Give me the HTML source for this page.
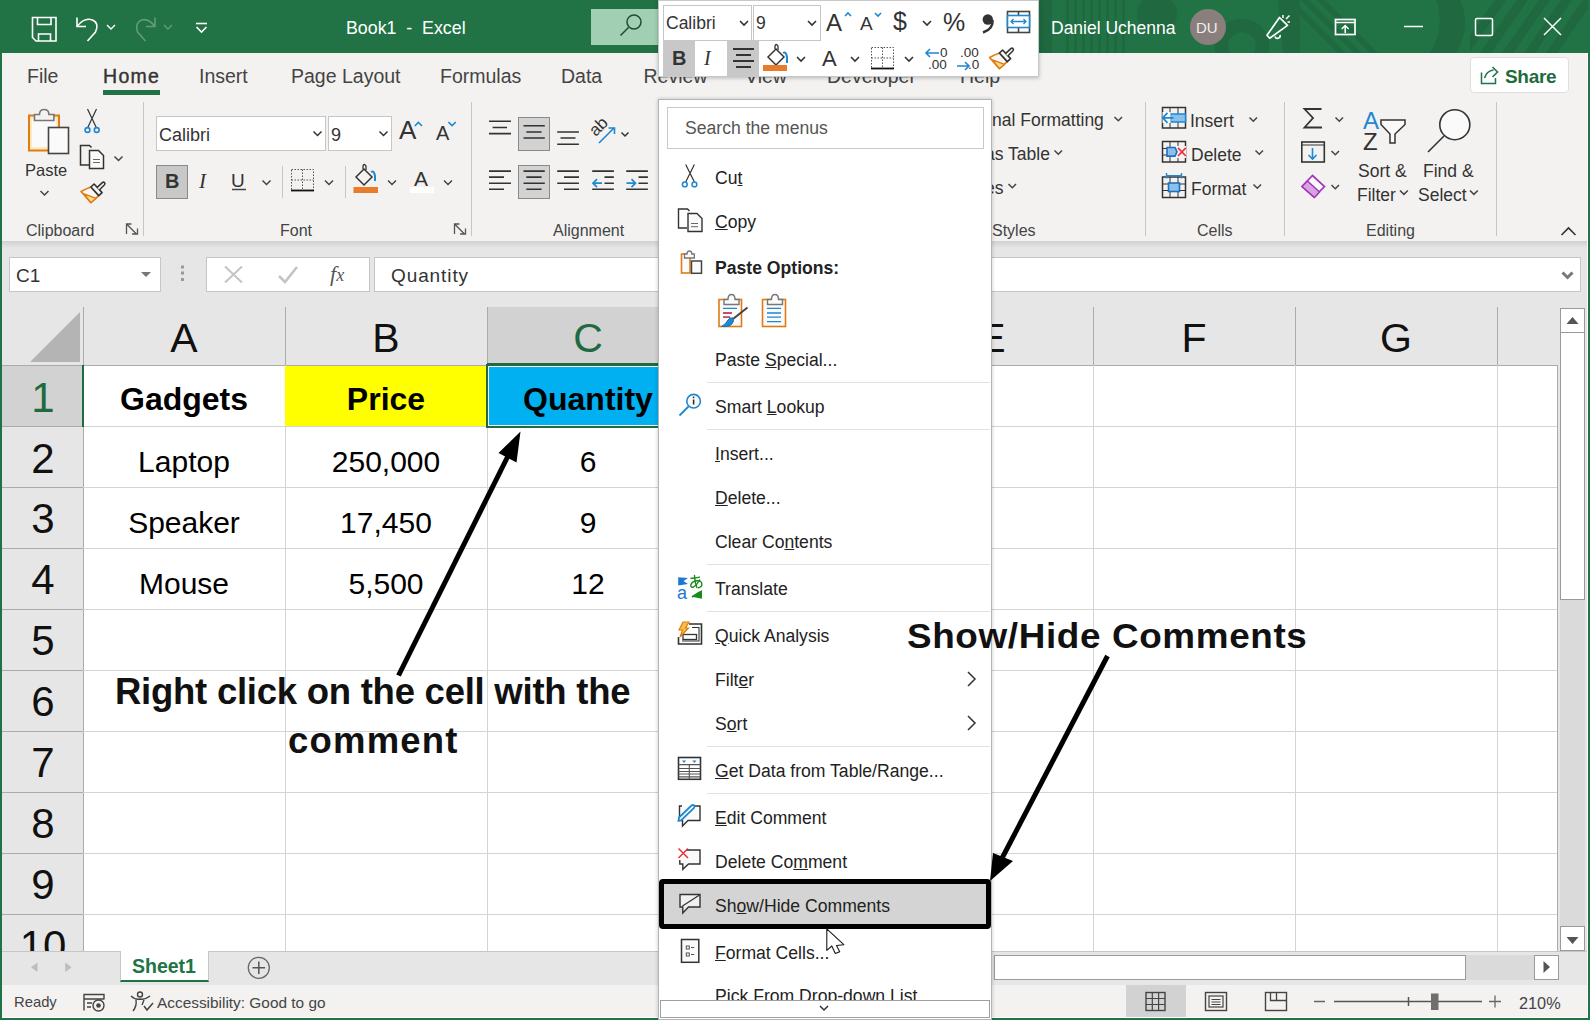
<!DOCTYPE html>
<html><head><meta charset="utf-8">
<style>
*{margin:0;padding:0;box-sizing:border-box}
html,body{width:1590px;height:1020px;overflow:hidden;background:#fff}
body{position:relative;font-family:"Liberation Sans",sans-serif;color:#222}
.a{position:absolute}
.t{position:absolute;white-space:nowrap;line-height:1}
svg{position:absolute;overflow:visible}
/* title */
#title{left:0;top:0;width:1590px;height:53px;background:#217346}
/* ribbon */
#ribbon{left:2px;top:53px;width:1585px;height:188px;background:#f3f2f1}
#fbar{left:2px;top:241px;width:1585px;height:66px;background:#e6e6e6}
.tab{font-size:19.5px;color:#444;top:67px}
.glabel{font-size:16px;color:#444;top:223px}
.sep{position:absolute;width:1px;background:#c8c6c4}
.rt{font-size:18px;color:#333}
/* grid */
#grid{left:2px;top:307px;width:1555px;height:644px;background:#fff}
.colh{position:absolute;top:307px;height:58px;background:#e6e6e6;border-right:1px solid #ababab;border-bottom:1px solid #ababab}
.ch{font-size:41px;color:#111;position:absolute;top:318px}
.rowh{position:absolute;left:2px;width:81px;background:#e6e6e6;border-bottom:1px solid #ababab;border-right:1px solid #ababab}
.rh{font-size:42px;color:#111;position:absolute}
.hl{position:absolute;left:83px;width:1474px;height:1px;background:#d4d4d4}
.vl{position:absolute;top:365px;height:586px;width:1px;background:#d4d4d4}
.cell{font-size:30px;color:#000;position:absolute;text-align:center;width:202px}
/* context menu */
#cm{left:658px;top:99px;width:334px;height:921px;background:#fff;border:1px solid #b4b4b4;box-shadow:0 0 4px rgba(0,0,0,.22)}
.mi{position:absolute;left:715px;font-size:17.6px;color:#222;margin-top:2px}
.msep{position:absolute;left:707px;width:283px;height:1px;background:#e1e1e1}
#mini{left:658px;top:0;width:381px;height:77px;background:#fff;border:1px solid #c8c8c8;box-shadow:0 1px 4px rgba(0,0,0,.25)}
.ann{font-weight:bold;color:#111;position:absolute}
</style></head>
<body>
<!-- TITLE BAR -->
<div id="title" class="a"></div>
<svg style="left:0;top:0" width="1" height="1" fill="none">
<defs><clipPath id="tb"><rect x="1040" y="0" width="548" height="53"/></clipPath><clipPath id="d1"><polygon points="1300,0 1333,0 1386,53 1300,53"/></clipPath><clipPath id="d2"><rect x="1470" y="0" width="118" height="53"/></clipPath></defs>
<g clip-path="url(#tb)" fill="#1f6840" stroke="none">
<rect x="1040" y="0" width="12" height="53"/>
<rect x="1066" y="0" width="3" height="53"/>
<rect x="1074" y="0" width="3" height="53"/>
<rect x="1082" y="0" width="3" height="53"/>
<rect x="1090" y="0" width="3" height="53"/>
<rect x="1098" y="0" width="3" height="53"/>
<rect x="1106" y="0" width="3" height="53"/>
<rect x="1114" y="0" width="3" height="53"/>
<rect x="1122" y="0" width="3" height="53"/>
<circle cx="1157" cy="14" r="20"/>
<circle cx="1242" cy="46" r="20.5" fill="none" stroke="#1f6840" stroke-width="13.5"/>
<polygon points="1278,0 1300,0 1300,53 1283,53"/>
<g clip-path="url(#d1)">
<polygon points="1285,0 1293,0 1346,53 1338,53"/>
<polygon points="1301,0 1309,0 1362,53 1354,53"/>
<polygon points="1317,0 1325,0 1378,53 1370,53"/>
<polygon points="1333,0 1341,0 1394,53 1386,53"/>
</g>
<path d="M1436,0 Q1446,26 1430,53 L1456,53 Q1472,26 1460,0 Z"/>
<g clip-path="url(#d2)">
<polygon points="1495,0 1506,0 1469,53 1458,53"/>
<polygon points="1517,0 1528,0 1491,53 1480,53"/>
<polygon points="1539,0 1550,0 1513,53 1502,53"/>
<polygon points="1561,0 1572,0 1535,53 1524,53"/>
<polygon points="1583,0 1594,0 1557,53 1546,53"/>
</g></g>
<g stroke="#fff" stroke-width="1.5">
<path d="M1267,35.2 L1279.5,17.5 L1287.5,25.4 L1269.7,38.2 Z" stroke-width="1.7" stroke-linejoin="round"/>
<path d="M1275,36.5 a2.6,2.6 0 0 0 5,-1.5" stroke-width="1.6"/>
<path d="M1283,15 v3 M1286,19 l3.5,-3.5 M1287.5,22 h2.5" stroke-width="1.5"/>
<rect x="1335.5" y="19.5" width="19.5" height="15" stroke-width="1.7"/>
<path d="M1335.5,22.5 h19.5 M1345.2,33 v-7.5 M1341.7,29 l3.5,-3.5 l3.5,3.5" stroke-width="1.5"/>
<path d="M1404,26.5 h19"/>
<rect x="1475.5" y="18.5" width="17" height="17" rx="1.5"/>
<path d="M1544,18 l17,17 M1561,18 l-17,17"/>
</g>
</svg>
<div class="t" style="left:346px;top:19.5px;font-size:17.8px;color:#fff">Book1&nbsp;&nbsp;-&nbsp;&nbsp;Excel</div>
<div class="a" style="left:591px;top:9px;width:70px;height:36px;background:#a0cfb3"></div>
<svg style="left:0;top:0" width="1" height="1" fill="none" stroke="#fff" stroke-width="1.6">
<path d="M32.5,17.5 h23.5 v23.5 h-20 l-3.5,-3.5 z"/>
<path d="M37.5,17.5 v7 h13.5 v-7"/>
<path d="M38.5,41 v-7 h12 v7"/>
<path d="M77,17.5 v9 h9" />
<path d="M77.5,26 q7,-9 15,-6 q7,3 3,12 l-8,9"/>
<polyline points="107,25 111,29 115,25" stroke-width="1.4"/>
<path d="M155,17.5 v9 h-9 M154.5,26 q-6,-8 -13,-6 q-7,3 -4,12 l8,9" stroke="#5f9c77"/>
<polyline points="164,25 168,29 172,25" stroke="#5f9c77" stroke-width="1.4"/>
<path d="M196,23.5 h11" stroke-width="1.6"/>
<polyline points="196.5,27 201.5,32 206.5,27" stroke-width="1.6"/>
<circle cx="634" cy="22" r="7" stroke="#1e4d33" stroke-width="1.5"/>
<line x1="628.5" y1="27.5" x2="620.5" y2="35.5" stroke="#1e4d33" stroke-width="1.6"/>
</svg>
<div class="t" style="left:1051px;top:20px;font-size:17.5px;color:#fff">Daniel Uchenna</div>
<div class="a" style="left:1190px;top:9px;width:36px;height:36px;border-radius:50%;background:#8a7f7c"></div>
<div class="t" style="left:1196px;top:20px;font-size:15px;color:#eee">DU</div>

<!-- RIBBON -->
<div id="ribbon" class="a"></div>
<div class="t tab" style="left:27px">File</div>
<div class="t tab" style="left:103px;color:#333;-webkit-text-stroke:0.4px #333;letter-spacing:1.3px">Home</div>
<div class="a" style="left:103px;top:90px;width:57px;height:5px;background:#217346"></div>
<div class="t tab" style="left:199px">Insert</div>
<div class="t tab" style="left:291px">Page Layout</div>
<div class="t tab" style="left:440px">Formulas</div>
<div class="t tab" style="left:561px">Data</div>
<div class="t tab" style="left:643.5px">Review</div>
<div class="t tab" style="left:745px">View</div>
<div class="t tab" style="left:827px">Developer</div>
<div class="t tab" style="left:960px">Help</div>

<div class="a" style="left:1470px;top:57px;width:99px;height:36px;background:#fff;border:1px solid #e1dfdd;border-radius:4px"></div>
<div class="t" style="left:1505px;top:66.7px;font-size:19px;font-weight:bold;color:#1e6b3d;letter-spacing:-0.3px">Share</div>
<svg style="left:0;top:0" width="1" height="1" fill="none" stroke="#217346" stroke-width="1.5">
<path d="M1481.5,72.5 v11 h14 v-5.5"/>
<path d="M1484.5,78 q2,-7 9,-8 M1492.5,67 l5,5 l-5,5" stroke-width="1.6"/>
</svg>

<div class="t glabel" style="left:26px">Clipboard</div>
<div class="t glabel" style="left:280px">Font</div>
<div class="t glabel" style="left:553px">Alignment</div>
<div class="t glabel" style="left:992px">Styles</div>
<div class="t glabel" style="left:1197px">Cells</div>
<div class="t glabel" style="left:1366px">Editing</div>
<div class="sep" style="left:143px;top:102px;height:134px"></div>
<div class="sep" style="left:471px;top:102px;height:134px"></div>
<div class="sep" style="left:1145px;top:102px;height:134px"></div>
<div class="sep" style="left:1284px;top:102px;height:134px"></div>
<div class="sep" style="left:1496px;top:102px;height:134px"></div>

<!-- RIBBON ICONS -->
<div class="a" style="left:156px;top:165px;width:32px;height:34px;background:#c8c8c8;border:1px solid #8a8a8a"></div>
<div class="a" style="left:156px;top:116px;width:170px;height:35px;background:#fff;border:1px solid #c6c6c6"></div>
<div class="a" style="left:328px;top:116px;width:64px;height:35px;background:#fff;border:1px solid #c6c6c6"></div>

<svg style="left:0;top:0" width="1" height="1" fill="none" stroke="#444" stroke-width="1.5">
<!-- paste -->
<rect x="29" y="115.5" width="30" height="35" fill="#fde9c0" stroke="#e07b12" stroke-width="2"/>
<rect x="32" y="119" width="24" height="28" fill="#fafafa" stroke="none"/>
<path d="M34.5,120.5 v-6 h5 q0,-5 4.7,-5 q4.7,0 4.7,5 h5 v6 z" fill="#f3f2f1" stroke="#777" stroke-width="1.6"/>
<rect x="48.5" y="127.5" width="20" height="26" fill="#fafafa" stroke="#444" stroke-width="1.6"/>
<polyline points="40.5,191 44.5,195 48.5,191" stroke-width="1.5"/>
<!-- scissors -->
<path d="M87.5,109 L96.5,128 M96.5,109 L87.5,128" stroke="#333" stroke-width="1.2"/>
<circle cx="87.5" cy="130" r="2.4" stroke="#1e88d2" stroke-width="1.6"/>
<circle cx="96.7" cy="130" r="2.4" stroke="#1e88d2" stroke-width="1.6"/>
<!-- copy -->
<path d="M89,165 h-8.5 v-19.5 h9 l2,2" stroke="#333" stroke-width="1.5"/>
<path d="M89.5,168.5 v-18 h9 l5,5 v13 z" fill="#fafafa" stroke="#333" stroke-width="1.5"/>
<path d="M93,159.5 h7 M93,162.5 h7" stroke="#666" stroke-width="1"/>
<polyline points="114.5,156.5 118.5,160.5 122.5,156.5"/>
<!-- format painter -->
<g transform="translate(80.5,181)"><path d="M0.6,10.5 Q6,7.5 10.4,6 L18.3,14.6 L10.4,21.6 Z" fill="#f7f7f7" stroke="#e07b12" stroke-width="1.7" stroke-linejoin="round"/>
<path d="M3.5,12.8 L15.5,17.4 L10.4,21.6 Z" fill="#fbd98a" stroke="#e07b12" stroke-width="1.3" stroke-linejoin="round"/>
<path d="M10.4,6 L13.6,3 L21.6,11.6 L18.3,14.6 Z" fill="#f7f7f7" stroke="#333" stroke-width="1.6" stroke-linejoin="round"/>
<path d="M16.5,6.6 L21.8,1.6 Q23,0.6 24,1.6 Q25,2.6 24,3.8 L18.8,9" fill="#f7f7f7" stroke="#333" stroke-width="1.5" stroke-linejoin="round"/></g>
<!-- launchers -->
<path d="M126.5,234 v-10 h5 M126.5,224 l10,10 M137.5,228.5 v5.5 h-5.5" stroke="#555" stroke-width="1.3"/>
<path d="M454.5,234 v-10 h5 M454.5,224 l10,10 M465.5,228.5 v5.5 h-5.5" stroke="#555" stroke-width="1.3"/>
<!-- font dropdowns -->
<polyline points="313.5,131.5 317.5,135.5 321.5,131.5" stroke="#333"/>
<polyline points="379.5,131.5 383.5,135.5 387.5,131.5" stroke="#333"/>
<polyline points="414.8,126 418.4,122.4 422,126" stroke="#1e88d2" stroke-width="1.6"/>
<polyline points="448.4,122 452.1,125.6 455.8,122" stroke="#1e88d2" stroke-width="1.6"/>
<polyline points="262.5,180.5 266.5,184.5 270.5,180.5"/>
<polyline points="325,180.5 329,184.5 333,180.5"/>
<polyline points="388,180.5 392,184.5 396,180.5"/>
<polyline points="444,180.5 448,184.5 452,180.5"/>
<line x1="282.5" y1="166" x2="282.5" y2="198" stroke="#c8c6c4" stroke-width="1"/>
<line x1="345.5" y1="166" x2="345.5" y2="198" stroke="#c8c6c4" stroke-width="1"/>
<line x1="232" y1="189.5" x2="246" y2="189.5" stroke="#444" stroke-width="1.5"/>
<!-- borders -->
<rect x="291.5" y="169.5" width="22" height="21" stroke="#555" stroke-width="1" stroke-dasharray="1.5,1.5"/>
<path d="M302.5,169.5 v21 M291.5,180 h22" stroke="#555" stroke-width="1" stroke-dasharray="1.5,1.5"/>
<line x1="291" y1="190.5" x2="314" y2="190.5" stroke="#111" stroke-width="1.8"/>
<!-- fill color -->
<path d="M356,177 l8,-8 l8,8 l-8,8 z" stroke="#333" stroke-width="1.5"/>
<path d="M363,169 v-3 q1,-3 3,0 v4" stroke="#333" stroke-width="1.3"/>
<path d="M371,172 q3,-2 4,4 v5" stroke="#1e88d2" stroke-width="2"/>
<rect x="353.5" y="187" width="24.5" height="6" fill="#e97b2e" stroke="none"/>
<rect x="410" y="187" width="24" height="6" fill="#fff" stroke="none"/>
<!-- alignment -->
<rect x="518.5" y="117.5" width="31" height="33" fill="#d2d2d2" stroke="#8a8a8a" stroke-width="1"/>
<rect x="518.5" y="165.5" width="31" height="33" fill="#d2d2d2" stroke="#8a8a8a" stroke-width="1"/>
<path d="M489,121.3 h22 M492.6,127.5 h14.4 M489,133.6 h22" stroke="#333" stroke-width="1.6"/>
<path d="M523.5,125.8 h21.3 M526.3,132 h15.3 M523.5,138 h21.3" stroke="#333" stroke-width="1.6"/>
<path d="M557.2,132 h21.7 M560.5,138 h15 M557.2,144.2 h21.7" stroke="#333" stroke-width="1.6"/>
<path d="M489,171.1 h22 M489,177.1 h15 M489,183.2 h22 M489,189.2 h15" stroke="#333" stroke-width="1.6"/>
<path d="M523.5,171.1 h21.3 M526.3,177.1 h15.3 M523.5,183.2 h21.3 M526.3,189.2 h15.3" stroke="#333" stroke-width="1.6"/>
<path d="M557.2,171.1 h21.7 M564,177.1 h15 M557.2,183.2 h21.7 M564,189.2 h15" stroke="#333" stroke-width="1.6"/>
<path d="M592.2,171.1 h21.7 M604.5,177.1 h9.4 M604.5,183.2 h9.4 M592.2,189.2 h21.7" stroke="#333" stroke-width="1.6"/>
<path d="M593,183.2 h9 M597,179.2 l-4,4 l4,4" stroke="#1e88d2" stroke-width="1.7"/>
<path d="M626.2,171.1 h21.7 M638.5,177.1 h9.4 M638.5,183.2 h9.4 M626.2,189.2 h21.7" stroke="#333" stroke-width="1.6"/>
<path d="M626.5,183.2 h9 M631.5,179.2 l4,4 l-4,4" stroke="#1e88d2" stroke-width="1.7"/>
<path d="M599,143 L614.5,127.5 M608.5,128 h6 v6" stroke="#1e88d2" stroke-width="1.6"/>
<polyline points="621.5,132.5 625,136 628.5,132.5" stroke="#333"/>
<!-- styles chevrons -->
<polyline points="1114.5,117 1118.3,120.8 1122,117"/>
<polyline points="1054.5,150.5 1058.3,154.3 1062,150.5"/>
<polyline points="1008.5,184 1012.3,187.8 1016,184"/>
<!-- cells icons -->
<rect x="1162.5" y="107.5" width="23" height="20.5" stroke="#333" stroke-width="1.5"/>
<path d="M1170,107.5 v20.5 M1178,107.5 v20.5 M1162.5,114.5 h23 M1162.5,121 h23" stroke="#333" stroke-width="1"/>
<rect x="1170.5" y="114" width="15" height="8" fill="#8cc0ec" stroke="#1e88d2" stroke-width="1.5"/>
<path d="M1162.5,112 h8 v11 h-8 z" fill="#fff" stroke="none"/>
<path d="M1163,117.8 h10.5 M1167.5,112.8 l-4.8,5 l4.8,5" stroke="#1e88d2" stroke-width="1.8"/>
<polyline points="1249.5,117.5 1253.3,121.3 1257,117.5"/>
<rect x="1162.5" y="141.5" width="23" height="20.5" stroke="#333" stroke-width="1.5"/>
<path d="M1170,141.5 v20.5 M1178,141.5 v20.5 M1162.5,148.5 h23 M1162.5,155 h23" stroke="#333" stroke-width="1"/>
<path d="M1176,146 h10 v12 h-10 z" fill="#f3f2f1" stroke="none"/>
<path d="M1167,147.5 h8 l2,4.3 l-2,4.3 h-8 z" fill="#8cc0ec" stroke="#1e6fc0" stroke-width="1.6"/>
<path d="M1178,147.8 l7.8,8.2 M1185.8,147.8 l-7.8,8.2" stroke="#e8333a" stroke-width="1.7"/>
<polyline points="1255.5,150.5 1259.3,154.3 1263,150.5"/>
<rect x="1162.5" y="177" width="23" height="20.5" stroke="#333" stroke-width="1.5"/>
<path d="M1170,177 v20.5 M1178,177 v20.5 M1162.5,184 h23 M1162.5,190.5 h23" stroke="#333" stroke-width="1"/>
<rect x="1168.5" y="183" width="11" height="8.5" fill="#8cc0ec" stroke="#1e6fc0" stroke-width="1.6"/>
<path d="M1166.5,175.8 h15 M1166.5,173 v5.5 M1181.5,173 v5.5" stroke="#1e88d2" stroke-width="1.4"/>
<polyline points="1253.5,184.5 1257.3,188.3 1261,184.5"/>
<!-- editing -->
<path d="M1321.5,109 h-17 l8.5,9 l-8.5,9.5 h17.5" stroke="#333" stroke-width="1.8" stroke-linejoin="miter"/>
<polyline points="1335.5,117.5 1339.3,121.3 1343,117.5"/>
<rect x="1301.8" y="142" width="22.5" height="20" stroke="#333" stroke-width="1.6"/>
<line x1="1302" y1="145" x2="1324" y2="145" stroke="#333" stroke-width="1"/>
<path d="M1312.5,148 v11 M1308.5,155 l4,4 l4,-4" stroke="#1e88d2" stroke-width="1.6"/>
<polyline points="1331.5,151 1335.3,154.8 1339,151"/>
<path d="M1302,186.5 l10.5,-11 l12,11 l-10.5,10.5 z" fill="#fafafa" stroke="#a335b8" stroke-width="1.7"/>
<path d="M1302,186.5 l5.5,-5.5 l12,11 l-5,5.5 z" fill="#d9a3e3" stroke="#a335b8" stroke-width="1.5"/>
<polyline points="1331.5,185 1335.3,188.8 1339,185"/>
<path d="M1405,120 h-24 v4.5 l9,9.5 v9 h5 v-9 l10,-9.5 z" fill="#fafafa" stroke="#333" stroke-width="1.5"/>
<circle cx="1454.8" cy="124.7" r="15" fill="#fafafa" stroke="#333" stroke-width="1.6"/>
<line x1="1428" y1="152" x2="1444" y2="136" stroke="#333" stroke-width="1.6"/>
<polyline points="1400,190.5 1403.9,194.4 1407.8,190.5"/>
<polyline points="1470,190.5 1473.9,194.4 1477.8,190.5"/>
<polyline points="1561.5,235 1568.5,228 1575.5,235" stroke="#333" stroke-width="1.6"/>
</svg>
<div class="t rt" style="left:159px;top:126px">Calibri</div>
<div class="t rt" style="left:331px;top:126px">9</div>
<div class="t" style="left:399px;top:117px;font-size:26px;color:#333">A</div>
<div class="t" style="left:436px;top:123px;font-size:20px;color:#333">A</div>
<div class="t" style="left:165px;top:171px;font-size:20px;font-weight:bold;color:#333">B</div>
<div class="t" style="left:199px;top:171px;font-size:21px;font-style:italic;color:#333;font-family:'Liberation Serif',serif">I</div>
<div class="t" style="left:231px;top:171px;font-size:19px;color:#333">U</div>
<div class="t" style="left:414px;top:168px;font-size:21px;color:#333">A</div>
<div class="t" style="left:25px;top:162px;font-size:16.5px;color:#333">Paste</div>
<div class="t" style="left:589px;top:118px;font-size:17px;color:#333;transform:rotate(-45deg);transform-origin:50% 50%">ab</div>
<div class="t rt" style="left:992px;top:112px;font-size:17.5px">nal Formatting</div>
<div class="t rt" style="left:985px;top:146px;font-size:17.5px">as Table</div>
<div class="t rt" style="left:985px;top:180px;font-size:17.5px">es</div>
<div class="t rt" style="left:1190px;top:113px;font-size:17.5px">Insert</div>
<div class="t rt" style="left:1191px;top:147px;font-size:17.5px">Delete</div>
<div class="t rt" style="left:1191px;top:181px;font-size:17.5px">Format</div>
<div class="t" style="left:1363px;top:109px;font-size:24px;color:#1e88d2">A</div>
<div class="t" style="left:1363px;top:130px;font-size:24px;color:#333">Z</div>
<div class="t rt" style="left:1358px;top:162.5px;font-size:17.5px">Sort &amp;</div>
<div class="t rt" style="left:1357px;top:186.5px;font-size:17.5px">Filter</div>
<div class="t rt" style="left:1423px;top:162.5px;font-size:17.5px">Find &amp;</div>
<div class="t rt" style="left:1418px;top:186.5px;font-size:17.5px">Select</div>

<!-- FORMULA BAR -->
<div id="fbar" class="a"></div>
<div class="a" style="left:9px;top:257px;width:152px;height:35px;background:#fff;border:1px solid #c6c6c6"></div>
<div class="t" style="left:16px;top:265.5px;font-size:19px;color:#333">C1</div>
<div class="a" style="left:206px;top:257px;width:164px;height:35px;background:#fff;border:1px solid #c6c6c6"></div>
<div class="a" style="left:374px;top:257px;width:1207px;height:35px;background:#fff;border:1px solid #c6c6c6"></div>
<div class="t" style="left:391px;top:265.5px;font-size:19px;letter-spacing:0.9px;color:#333">Quantity</div>
<svg style="left:0;top:0" width="1" height="1" fill="none">
<polygon points="141,272 151,272 146,277" fill="#777"/>
<rect x="181" y="265.5" width="3" height="3" fill="#999"/>
<rect x="181" y="271.5" width="3" height="3" fill="#999"/>
<rect x="181" y="278" width="3" height="3" fill="#999"/>
<path d="M225,266.5 l17,16 M242,266.5 l-17,16" stroke="#c4c4c4" stroke-width="2"/>
<path d="M279,276 l6,6 l12,-15" stroke="#c4c4c4" stroke-width="2.6"/>
<path d="M1562.5,272.5 l5,5 l5,-5" stroke="#777" stroke-width="3"/>
</svg>
<div class="t" style="left:330px;top:263px;font-size:22px;font-style:italic;font-family:'Liberation Serif',serif;color:#555">f<span style="font-size:18px">x</span></div>
<div class="a" style="left:2px;top:241px;width:1585px;height:7px;background:linear-gradient(#d0d0d0,#e6e6e6)"></div>

<!-- GRID -->
<div id="grid" class="a"></div>
<div class="a" style="left:83px;top:307px;width:202px;height:59px;background:#e6e6e6;border-left:1px solid #ababab;border-bottom:1px solid #ababab"></div>
<div class="t ch" style="left:83px;width:202px;text-align:center;color:#111">A</div>
<div class="a" style="left:285px;top:307px;width:202px;height:59px;background:#e6e6e6;border-left:1px solid #ababab;border-bottom:1px solid #ababab"></div>
<div class="t ch" style="left:285px;width:202px;text-align:center;color:#111">B</div>
<div class="a" style="left:487px;top:307px;width:202px;height:59px;background:#d2d2d2;border-left:1px solid #ababab;border-bottom:1px solid #ababab"></div>
<div class="t ch" style="left:487px;width:202px;text-align:center;color:#1e6b41">C</div>
<div class="a" style="left:689px;top:307px;width:202px;height:59px;background:#e6e6e6;border-left:1px solid #ababab;border-bottom:1px solid #ababab"></div>
<div class="t ch" style="left:689px;width:202px;text-align:center;color:#111">D</div>
<div class="a" style="left:891px;top:307px;width:202px;height:59px;background:#e6e6e6;border-left:1px solid #ababab;border-bottom:1px solid #ababab"></div>
<div class="t ch" style="left:891px;width:202px;text-align:center;color:#111">E</div>
<div class="a" style="left:1093px;top:307px;width:202px;height:59px;background:#e6e6e6;border-left:1px solid #ababab;border-bottom:1px solid #ababab"></div>
<div class="t ch" style="left:1093px;width:202px;text-align:center;color:#111">F</div>
<div class="a" style="left:1295px;top:307px;width:202px;height:59px;background:#e6e6e6;border-left:1px solid #ababab;border-bottom:1px solid #ababab"></div>
<div class="t ch" style="left:1295px;width:202px;text-align:center;color:#111">G</div>
<div class="a" style="left:1497px;top:307px;width:60px;height:59px;background:#e6e6e6;border-left:1px solid #ababab;border-bottom:1px solid #ababab"></div>
<div class="a" style="left:2px;top:307px;width:81px;height:59px;background:#e6e6e6;border-bottom:1px solid #ababab"></div>
<svg style="left:0;top:0" width="1" height="1"><polygon points="30,362 80,362 80,312" fill="#b4b4b4"/></svg>
<div class="a" style="left:2px;top:366px;width:82px;height:61px;background:#d2d2d2;border-bottom:1px solid #ababab;border-right:1px solid #ababab"></div>
<div class="t rh" style="left:2px;width:82px;text-align:center;top:377px;color:#1e6b41">1</div>
<div class="a" style="left:2px;top:427px;width:82px;height:61px;background:#e6e6e6;border-bottom:1px solid #ababab;border-right:1px solid #ababab"></div>
<div class="t rh" style="left:2px;width:82px;text-align:center;top:438px">2</div>
<div class="a" style="left:2px;top:488px;width:82px;height:61px;background:#e6e6e6;border-bottom:1px solid #ababab;border-right:1px solid #ababab"></div>
<div class="t rh" style="left:2px;width:82px;text-align:center;top:498px">3</div>
<div class="a" style="left:2px;top:549px;width:82px;height:61px;background:#e6e6e6;border-bottom:1px solid #ababab;border-right:1px solid #ababab"></div>
<div class="t rh" style="left:2px;width:82px;text-align:center;top:559px">4</div>
<div class="a" style="left:2px;top:610px;width:82px;height:61px;background:#e6e6e6;border-bottom:1px solid #ababab;border-right:1px solid #ababab"></div>
<div class="t rh" style="left:2px;width:82px;text-align:center;top:620px">5</div>
<div class="a" style="left:2px;top:671px;width:82px;height:61px;background:#e6e6e6;border-bottom:1px solid #ababab;border-right:1px solid #ababab"></div>
<div class="t rh" style="left:2px;width:82px;text-align:center;top:681px">6</div>
<div class="a" style="left:2px;top:732px;width:82px;height:61px;background:#e6e6e6;border-bottom:1px solid #ababab;border-right:1px solid #ababab"></div>
<div class="t rh" style="left:2px;width:82px;text-align:center;top:742px">7</div>
<div class="a" style="left:2px;top:793px;width:82px;height:61px;background:#e6e6e6;border-bottom:1px solid #ababab;border-right:1px solid #ababab"></div>
<div class="t rh" style="left:2px;width:82px;text-align:center;top:803px">8</div>
<div class="a" style="left:2px;top:854px;width:82px;height:61px;background:#e6e6e6;border-bottom:1px solid #ababab;border-right:1px solid #ababab"></div>
<div class="t rh" style="left:2px;width:82px;text-align:center;top:864px">9</div>
<div class="a" style="left:2px;top:915px;width:82px;height:36px;background:#e6e6e6;border-right:1px solid #ababab"></div>
<div class="t rh" style="left:2px;width:82px;text-align:center;top:925px">10</div>
<div class="hl" style="top:426px"></div>
<div class="hl" style="top:487px"></div>
<div class="hl" style="top:548px"></div>
<div class="hl" style="top:609px"></div>
<div class="hl" style="top:670px"></div>
<div class="hl" style="top:731px"></div>
<div class="hl" style="top:792px"></div>
<div class="hl" style="top:853px"></div>
<div class="hl" style="top:914px"></div>
<div class="vl" style="left:285px"></div>
<div class="vl" style="left:487px"></div>
<div class="vl" style="left:689px"></div>
<div class="vl" style="left:891px"></div>
<div class="vl" style="left:1093px"></div>
<div class="vl" style="left:1295px"></div>
<div class="vl" style="left:1497px"></div>
<div class="a" style="left:285px;top:366px;width:202px;height:60px;background:#ffff00"></div>
<div class="a" style="left:487px;top:366px;width:202px;height:60px;background:#00b0f0"></div>
<div class="a" style="left:486px;top:364px;width:204px;height:64px;border:2px solid #1e6b41"></div>
<div class="a" style="left:488px;top:366px;width:200px;height:60px;border:1px solid #fff"></div>
<div class="a" style="left:82px;top:365px;width:2px;height:62px;background:#1e6b41"></div>
<div class="a" style="left:487px;top:363px;width:202px;height:2px;background:#1e6b41"></div>
<div class="t cell" style="left:83px;top:383px;font-weight:bold;font-size:32px">Gadgets</div>
<div class="t cell" style="left:285px;top:383px;font-weight:bold;font-size:32px">Price</div>
<div class="t cell" style="left:487px;top:383px;font-weight:bold;font-size:32px">Quantity</div>
<div class="t cell" style="left:83px;top:447px">Laptop</div>
<div class="t cell" style="left:285px;top:447px">250,000</div>
<div class="t cell" style="left:487px;top:447px">6</div>
<div class="t cell" style="left:83px;top:508px">Speaker</div>
<div class="t cell" style="left:285px;top:508px">17,450</div>
<div class="t cell" style="left:487px;top:508px">9</div>
<div class="t cell" style="left:83px;top:569px">Mouse</div>
<div class="t cell" style="left:285px;top:569px">5,500</div>
<div class="t cell" style="left:487px;top:569px">12</div>


<!-- SHEET TABS / STATUS -->
<!-- vertical scrollbar -->
<div class="a" style="left:1557px;top:307px;width:30px;height:644px;background:#e6e6e6"></div>
<div class="a" style="left:1557px;top:365px;width:1px;height:586px;background:#ababab"></div>
<div class="a" style="left:1560px;top:308px;width:25px;height:25px;background:#fff;border:1px solid #9a9a9a"></div>
<div class="a" style="left:1560px;top:332px;width:25px;height:268px;background:#fff;border:1px solid #9a9a9a"></div>
<div class="a" style="left:1560px;top:600px;width:25px;height:326px;background:#dadada"></div>
<div class="a" style="left:1560px;top:926px;width:25px;height:25px;background:#fff;border:1px solid #9a9a9a"></div>
<svg style="left:0;top:0" width="1" height="1"><polygon points="1566.5,324 1578.5,324 1572.5,317" fill="#555"/><polygon points="1566.5,937 1578.5,937 1572.5,944" fill="#555"/></svg>
<!-- tab bar -->
<div class="a" style="left:2px;top:951px;width:1585px;height:34px;background:#e6e6e6;border-top:1px solid #c6c6c6"></div>
<div class="a" style="left:120px;top:951px;width:89px;height:31px;background:#fff;border:1px solid #c6c6c6;border-top:none;border-bottom:2px solid #217346"></div>
<div class="t" style="left:132px;top:956.5px;font-size:19.5px;font-weight:bold;color:#217346">Sheet1</div>
<svg style="left:0;top:0" width="1" height="1" fill="none">
<polygon points="37.5,962.5 37.5,972 31,967.2" fill="#bdbdbd"/>
<polygon points="65.2,962.5 65.2,972 71.6,967.2" fill="#bdbdbd"/>
<circle cx="258.8" cy="967.8" r="10.5" stroke="#666" stroke-width="1.3"/>
<path d="M252.5,967.8 h12.6 M258.8,961.5 v12.6" stroke="#555" stroke-width="1.5"/>
</svg>
<!-- horizontal scrollbar -->
<div class="a" style="left:993px;top:955px;width:566px;height:25px;background:#dadada"></div>
<div class="a" style="left:994px;top:955px;width:472px;height:25px;background:#fff;border:1px solid #9a9a9a"></div>
<div class="a" style="left:1534px;top:955px;width:25px;height:25px;background:#fff;border:1px solid #9a9a9a"></div>
<svg style="left:0;top:0" width="1" height="1"><polygon points="1543.5,961 1543.5,973 1550,967" fill="#555"/></svg>
<!-- status bar -->
<div class="a" style="left:2px;top:985px;width:1585px;height:32px;background:#f3f2f1"></div>
<div class="t" style="left:14px;top:995px;font-size:14.8px;color:#444">Ready</div>
<div class="t" style="left:157px;top:995px;font-size:15.4px;color:#444">Accessibility: Good to go</div>
<div class="a" style="left:1126px;top:985px;width:60px;height:32px;background:#d2d2d2"></div>
<div class="t" style="left:1519px;top:995px;font-size:16.3px;color:#444">210%</div>
<svg style="left:0;top:0" width="1" height="1" fill="none" stroke="#444" stroke-width="1.4">
<!-- macro icon -->
<path d="M84,1010.5 v-16 h20 v5 M84,999 h20 M87,1003 h5 M87,1007 h4"/>
<circle cx="98.5" cy="1005.5" r="5.5" fill="#f3f2f1"/>
<circle cx="98.5" cy="1005.5" r="2.3" fill="#444" stroke="none"/>
<!-- accessibility -->
<circle cx="140" cy="994.5" r="2.5"/>
<path d="M131,996 q4,4 9,3 q5,1 10,-3 M136,1000 q1,6 -3,11 M144,1000 l-2,5"/>
<path d="M144,1006 l3,4 l6,-7" stroke-width="1.5"/>
<!-- view icons -->
<rect x="1146" y="992.5" width="19" height="18"/>
<path d="M1152.3,992.5 v18 M1158.6,992.5 v18 M1146,998.5 h19 M1146,1004.5 h19" stroke-width="1.2"/>
<rect x="1205.5" y="992.5" width="21" height="18"/>
<rect x="1209" y="996" width="14" height="11" stroke-width="1.2"/>
<path d="M1211.5,999.5 h9 M1211.5,1002 h9 M1211.5,1004.5 h9" stroke-width="1"/>
<rect x="1265.5" y="992.5" width="21" height="18"/>
<path d="M1270.5,992.5 v8 h6 v-8 M1276.5,1000.5 h10" stroke-width="1.3"/>
<!-- zoom -->
<path d="M1314,1001.5 h11 M1489,1001.5 h12 M1495,995.5 v12" stroke="#666" stroke-width="1.3"/>
<path d="M1334,1001.5 h148" stroke="#555" stroke-width="1.5"/>
<path d="M1408.5,997 v9" stroke="#555" stroke-width="1.5"/>
<rect x="1431" y="993.5" width="7.5" height="16.5" fill="#6f6f6f" stroke="none"/>
</svg>
<div class="a" style="left:0;top:1018px;width:1590px;height:2px;background:#217346"></div>
<div class="a" style="left:0;top:53px;width:2px;height:967px;background:#217346"></div>
<div class="a" style="left:1588px;top:53px;width:2px;height:967px;background:#217346"></div>


<!-- CONTEXT MENU -->
<div id="cm" class="a"></div>
<div class="a" style="left:667px;top:107px;width:317px;height:42px;border:1px solid #c8c8c8;background:#fff"></div>
<div class="t" style="left:685px;top:119.5px;font-size:17.6px;color:#555">Search the menus</div>
<div class="a" style="left:659px;top:879px;width:332px;height:50px;background:#d4d4d4;border:5px solid #000;border-radius:4px"></div>
<div class="t mi" style="top:168px">Cu<u>t</u></div>
<div class="t mi" style="top:212px"><u>C</u>opy</div>
<div class="t mi" style="top:258px"><b>Paste Options:</b></div>
<div class="t mi" style="top:350px">Paste <u>S</u>pecial...</div>
<div class="t mi" style="top:397px">Smart <u>L</u>ookup</div>
<div class="t mi" style="top:444px"><u>I</u>nsert...</div>
<div class="t mi" style="top:488px"><u>D</u>elete...</div>
<div class="t mi" style="top:532px">Clear Co<u>n</u>tents</div>
<div class="t mi" style="top:579px">Translate</div>
<div class="t mi" style="top:626px"><u>Q</u>uick Analysis</div>
<div class="t mi" style="top:670px">Filt<u>e</u>r</div>
<div class="t mi" style="top:714px">S<u>o</u>rt</div>
<div class="t mi" style="top:761px"><u>G</u>et Data from Table/Range...</div>
<div class="t mi" style="top:808px"><u>E</u>dit Comment</div>
<div class="t mi" style="top:852px">Delete Co<u>m</u>ment</div>
<div class="t mi" style="top:896px">Sh<u>o</u>w/Hide Comments</div>
<div class="t mi" style="top:943px"><u>F</u>ormat Cells...</div>
<div class="t mi" style="top:986px">Pic<u>k</u> From Drop-down List</div>
<div class="msep" style="top:382px"></div>
<div class="msep" style="top:429px"></div>
<div class="msep" style="top:564px"></div>
<div class="msep" style="top:611px"></div>
<div class="msep" style="top:746px"></div>
<div class="msep" style="top:793px"></div>
<svg style="left:0;top:0" width="1" height="1"><polyline points="968,672 975,679 968,686" fill="none" stroke="#333" stroke-width="1.5"/></svg>
<svg style="left:0;top:0" width="1" height="1"><polyline points="968,716 975,723 968,730" fill="none" stroke="#333" stroke-width="1.5"/></svg>
<div class="a" style="left:660px;top:1000px;width:330px;height:18px;background:#fff;border:1px solid #a0a0a0"></div>
<svg style="left:0;top:0" width="1" height="1"><polyline points="820,1006 824,1010 828,1006" fill="none" stroke="#333" stroke-width="1.5"/></svg>

<svg style="left:0;top:0" width="1" height="1" fill="none" stroke="#444" stroke-width="1.3">
<!-- cut -->
<path d="M685.7,164.5 L694.4,182 M694.4,164.5 L685.7,182" stroke="#333" stroke-width="1.2"/>
<circle cx="684.8" cy="184.4" r="2.4" stroke="#1e88d2" stroke-width="1.5"/>
<circle cx="694.4" cy="184.4" r="2.4" stroke="#1e88d2" stroke-width="1.5"/>
<!-- copy -->
<path d="M687,228 h-8.5 v-19 h9 l2,2" stroke="#333" stroke-width="1.4"/>
<path d="M688,231.5 v-18 h9 l5,5 v13 z" fill="#fafafa" stroke="#333" stroke-width="1.4"/>
<path d="M691,223.5 h7 M691,226.7 h7" stroke="#666" stroke-width="1"/>
<!-- paste options -->
<rect x="681.5" y="254" width="8.5" height="19" fill="#fafafa" stroke="#e07b12" stroke-width="1.6"/>
<path d="M684.5,258 v-4 h2.5 q0,-3 2.4,-3 q2.4,0 2.4,3 h2.5 v4 z" fill="#fafafa" stroke="#777" stroke-width="1.3"/>
<rect x="691.5" y="261" width="10" height="12.3" fill="#fafafa" stroke="#444" stroke-width="1.5"/>
<!-- paste keep source -->
<rect x="719" y="299.5" width="22.5" height="27" fill="#fafafa" stroke="#e07b12" stroke-width="1.6"/>
<path d="M724,304.5 v-5 h4 q0,-5 3.5,-5 q3.5,0 3.5,5 h4 v5 z" fill="#fafafa" stroke="#777" stroke-width="1.4"/>
<path d="M723,308.3 h14 M723,313 h9 M723,317.2 h7" stroke="#1e88d2" stroke-width="1.3"/>
<path d="M723,313 h9 M723,317.2 h7" stroke="#e8333a" stroke-width="1.3"/>
<path d="M747.5,307.5 L733,319" stroke="#444" stroke-width="2"/>
<path d="M733,318 q-3,-1 -5,2 q-2,4 -6.5,6.5 q7,1 10,-2 q3,-3 1.5,-6.5 z" fill="#1e88d2" stroke="#1e6fb0" stroke-width="1"/>
<!-- paste values -->
<rect x="762.5" y="299.5" width="23" height="27" fill="#fafafa" stroke="#e07b12" stroke-width="1.6"/>
<path d="M767.5,304.5 v-5 h4 q0,-5 3.5,-5 q3.5,0 3.5,5 h4 v5 z" fill="#fafafa" stroke="#777" stroke-width="1.4"/>
<path d="M767,308.3 h14 M767,313 h14 M767,317.2 h14 M767,321.7 h14" stroke="#1e88d2" stroke-width="1.3"/>
<!-- smart lookup -->
<circle cx="693.6" cy="401.2" r="6.8" fill="#fafafa" stroke="#1e88d2" stroke-width="1.6"/>
<line x1="688.5" y1="406.5" x2="679.5" y2="415.5" stroke="#1e88d2" stroke-width="1.8"/>
<path d="M693.6,399.5 v5" stroke="#222" stroke-width="1.5"/>
<circle cx="693.6" cy="397.3" r="0.9" fill="#222" stroke="none"/>
<!-- translate -->
<polygon points="678.2,577.2 688,578.1 683.5,581 688,584 678.2,585.5" fill="#1e78d2" stroke="none"/>
<polygon points="692,596.8 702,589.9 702,598.7" fill="#1a8a1a" stroke="none"/>
<path d="M692,597 l8,-5" stroke="#1a8a1a" stroke-width="2"/>
</svg>
<div class="t" style="left:677px;top:584px;font-size:18px;color:#1e78d2">a</div>
<svg style="left:0;top:0" width="1" height="1" fill="none" stroke="#1a8a1a" stroke-width="1.4" stroke-linecap="round">
<path d="M691,578.2 q4,0.4 8.5,-1"/>
<path d="M694.5,575.5 q0.3,7 2.3,12"/>
<path d="M699.5,580 q-2.5,5 -6,7 q-3,1 -2.6,-2.2 q1,-3.5 6,-4 q5,-0.3 5,3.5 q0,2.8 -3.5,3.5"/>
</svg>
<svg style="left:0;top:0" width="1" height="1" fill="none" stroke="#444" stroke-width="1.4">
<!-- quick analysis -->
<path d="M689,624 h12.5 v20 h-23 v-7" stroke="#333" stroke-width="1.6"/>
<path d="M692,627.5 h7 v13.5 h-17" stroke="#333" stroke-width="1.1"/>
<rect x="683" y="634.5" width="13.5" height="5" stroke="#333" stroke-width="1.3"/>
<polygon points="683,622 689,622 685.5,628 688.5,628 680,637 682.5,630 679,630" fill="#f5c04a" stroke="#e07b12" stroke-width="1.2"/>
<!-- get data -->
<rect x="678.5" y="757.5" width="22" height="21.8" stroke="#333" stroke-width="1.6"/>
<path d="M678.5,764.6 h22 M678.5,768.5 h22 M678.5,771.5 h22 M678.5,774 h22 M678.5,776.9 h22 M689.3,764.6 v14.7" stroke="#555" stroke-width="1.1"/>
<polygon points="682,760.5 686.2,760.5 684.1,763" fill="#1e88d2" stroke="none"/>
<polygon points="692.3,760.5 696.5,760.5 694.4,763" fill="#1e88d2" stroke="none"/>
<!-- edit comment -->
<path d="M682,806 h-2.5 v14.5 h3 v5.5 l5.5,-5.5 h12 v-14.5 h-7" fill="#fafafa" stroke="#333" stroke-width="1.4"/>
<path d="M679,817.5 l12.5,-12 q1.5,-1 2.5,0 q1,1 0,2.5 l-12.5,12 l-3,0.8 z" fill="#fff" stroke="#1e88d2" stroke-width="1.8"/>
<!-- delete comment -->
<path d="M686,850 h14 v14 h-11.5 l-5.7,5.3 v-5.3 h-3 v-4" fill="#fafafa" stroke="#333" stroke-width="1.4"/>
<path d="M678.5,848.5 l9.5,9.5 M688,848.5 l-9.5,9.5" stroke="#e8333a" stroke-width="1.5"/>
<!-- show/hide comments -->
<path d="M680,894.5 h20 v12.5 h-11.5 l-5.7,6 v-6 h-2.8 z" fill="#f0f0f0" stroke="#333" stroke-width="1.4"/>
<line x1="682.5" y1="906" x2="699.5" y2="895" stroke="#333" stroke-width="1.3"/>
<!-- format cells -->
<rect x="681.5" y="939.5" width="17.3" height="22.8" fill="#fafafa" stroke="#333" stroke-width="1.5"/>
<rect x="686.3" y="946" width="3" height="3" stroke="#555" stroke-width="1"/>
<rect x="686.3" y="953" width="3" height="3" stroke="#555" stroke-width="1"/>
<path d="M691,947.5 h3.3 M691,954.5 h3.3" stroke="#555" stroke-width="1"/>
</svg>

<!-- MINI TOOLBAR -->
<div id="mini" class="a"></div>
<div class="a" style="left:663px;top:5px;width:89px;height:36px;border:1px solid #c6c6c6"></div>
<div class="a" style="left:753px;top:5px;width:68px;height:36px;border:1px solid #c6c6c6"></div>
<div class="a" style="left:663px;top:40px;width:32px;height:36px;background:#c8c8c8"></div>
<div class="a" style="left:727px;top:40px;width:32px;height:36px;background:#c8c8c8"></div>
<div class="t" style="left:666px;top:15px;font-size:17.5px;color:#333">Calibri</div>
<div class="t" style="left:756px;top:15px;font-size:17.5px;color:#333">9</div>
<div class="t" style="left:826px;top:11px;font-size:24px;color:#333">A</div>
<div class="t" style="left:860px;top:14px;font-size:19px;color:#333">A</div>
<div class="t" style="left:672px;top:48px;font-size:20px;font-weight:bold;color:#333">B</div>
<div class="t" style="left:704px;top:48px;font-size:20px;font-style:italic;color:#333;font-family:'Liberation Serif',serif">I</div>
<div class="t" style="left:893px;top:9px;font-size:25px;color:#333">$</div>
<div class="t" style="left:943px;top:10px;font-size:25px;color:#333">%</div>
<div class="t" style="left:822px;top:48px;font-size:22px;color:#333">A</div>
<div class="t" style="left:940px;top:46px;font-size:13.5px;color:#333">0</div>
<div class="t" style="left:928px;top:58px;font-size:13.5px;color:#333">.00</div>
<div class="t" style="left:960px;top:46px;font-size:13.5px;color:#333">.00</div>
<div class="t" style="left:968px;top:58px;font-size:13.5px;color:#333">.0</div>
<svg style="left:0;top:0" width="1" height="1" fill="none" stroke="#333" stroke-width="1.6">
<polyline points="740,21 744,25 748,21"/>
<polyline points="808,21 812,25 816,21"/>
<polyline points="845,16 848,13 851,16" stroke="#1e88d2"/>
<polyline points="875,13 878,16 881,13" stroke="#1e88d2"/>
<polyline points="923,21 927,25 931,21"/>
<circle cx="987.8" cy="19.5" r="5.2" fill="#333" stroke="none"/><path d="M992.5,20 q1,9 -9.5,12.5" stroke="#333" stroke-width="2.6"/>
<rect x="1007.5" y="11.5" width="22" height="21" stroke="#444"/>
<line x1="1018.5" y1="11.5" x2="1018.5" y2="32.5" stroke="#444"/>
<rect x="1007.5" y="15.5" width="22" height="12" stroke="#1e88d2" fill="#fff"/>
<path d="M1011,21.5 h15 M1013.5,19 l-2.5,2.5 l2.5,2.5 M1023.5,19 l2.5,2.5 l-2.5,2.5" stroke="#1e88d2" stroke-width="1.3"/>
<path d="M733,49 h21 M736,55 h15 M733,61 h21 M736,67 h15" stroke="#333" stroke-width="1.8"/>
<path d="M768,57 l8,-8 l8,8 l-8,8 z" stroke="#333" stroke-width="1.5"/>
<path d="M775,49 v-3 q1,-3 3,0 v4" stroke="#333" stroke-width="1.3"/>
<path d="M783,53 q3,-2 4,4 v6" stroke="#1e88d2" stroke-width="2"/>
<rect x="763" y="65" width="24" height="6" fill="#e97b2e" stroke="none"/>
<polyline points="797,57 801,61 805,57"/>
<polyline points="851,57 855,61 859,57"/>
<polyline points="905,57 909,61 913,57"/>
<rect x="871.5" y="47.5" width="22" height="21" stroke="#555" stroke-dasharray="1.5,1.5" stroke-width="1"/>
<path d="M882.5,47.5 v21 M871.5,58 h22" stroke="#555" stroke-dasharray="1.5,1.5" stroke-width="1"/>
<line x1="871" y1="68.5" x2="894" y2="68.5" stroke="#111" stroke-width="1.8"/>
<path d="M926,53 h13 M930,49 l-4,4 l4,4" stroke="#1e88d2" stroke-width="1.6"/>
<path d="M957,66 h12 M965,62 l4,4 l-4,4" stroke="#1e88d2" stroke-width="1.6"/>
<g transform="translate(989,47)"><path d="M0.6,10.5 Q6,7.5 10.4,6 L18.3,14.6 L10.4,21.6 Z" fill="#f7f7f7" stroke="#e07b12" stroke-width="1.7" stroke-linejoin="round"/>
<path d="M3.5,12.8 L15.5,17.4 L10.4,21.6 Z" fill="#fbd98a" stroke="#e07b12" stroke-width="1.3" stroke-linejoin="round"/>
<path d="M10.4,6 L13.6,3 L21.6,11.6 L18.3,14.6 Z" fill="#f7f7f7" stroke="#333" stroke-width="1.6" stroke-linejoin="round"/>
<path d="M16.5,6.6 L21.8,1.6 Q23,0.6 24,1.6 Q25,2.6 24,3.8 L18.8,9" fill="#f7f7f7" stroke="#333" stroke-width="1.5" stroke-linejoin="round"/></g>
</svg>

<svg style="left:0;top:0" width="1" height="1"><path d="M826.8,928.8 V950.3 L831.8,946 L835.3,953.5 L839.7,951.7 L836.5,945.5 L843.8,944.7 Z" fill="#fff" stroke="#1a1a22" stroke-width="1.1" stroke-linejoin="round"/></svg>
<!-- ANNOTATIONS -->
<div class="t ann" style="left:115px;top:673.8px;font-size:36.5px;letter-spacing:-0.25px">Right click on the cell with the</div>
<div class="t ann" style="left:288px;top:722.5px;font-size:36.5px;letter-spacing:1.2px">comment</div>
<div class="t ann" style="left:907px;top:619px;font-size:34.5px;letter-spacing:0.6px;transform:scaleX(1.068);transform-origin:0 0">Show/Hide Comments</div>
<svg style="left:0;top:0" width="1" height="1">
<line x1="398.5" y1="675.5" x2="512" y2="448" stroke="#000" stroke-width="5"/>
<polygon points="520.5,431.5 498.5,453 516.5,462.5" fill="#000"/>
<line x1="1107.5" y1="656" x2="999" y2="864" stroke="#000" stroke-width="5"/>
<polygon points="990,881 993,853 1013,861" fill="#000"/>
</svg>

</body></html>
